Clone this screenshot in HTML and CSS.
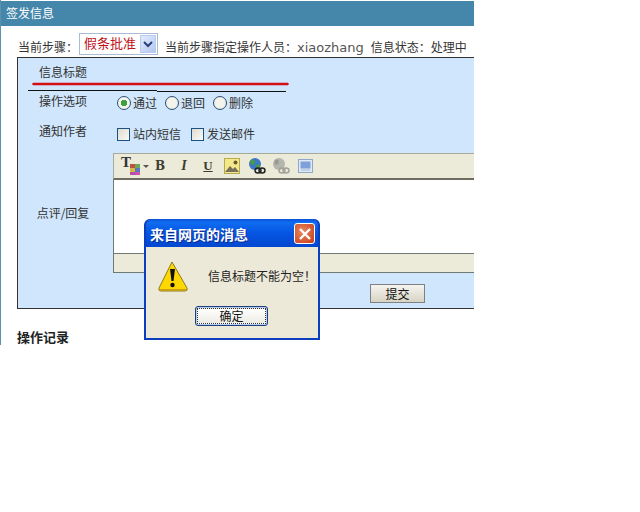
FILE: index.html
```html
<!DOCTYPE html>
<html lang="zh">
<head>
<meta charset="utf-8">
<title>签发信息</title>
<link rel="stylesheet" href="styles.css">
</head>
<body>
<div class="page">
  <div class="titlebar">签发信息</div>
  <div class="steps">
    <span>当前步骤：</span>
    <div class="select"><span class="select-text">假条批准</span><span class="select-btn"><svg width="16" height="18" viewBox="0 0 16 18"><path d="M4 7l4 4 4-4" fill="none" stroke="#2b3f7d" stroke-width="2"/></svg></span></div>
    <span class="assign">当前步骤指定操作人员：<span class="latin">xiaozhang</span></span>
    <span class="status">信息状态：处理中</span>
  </div>
  <div class="panel">
    <div class="title-row">
      <div class="row-label">信息标题</div>
      <div class="rule"><i class="seg"></i><i class="seg seg-low"></i></div>
    </div>
    <div class="row row-options">
      <div class="row-label">操作选项</div>
      <div class="controls">
        <label class="opt"><i class="radio on"></i>通过</label>
        <label class="opt"><i class="radio"></i>退回</label>
        <label class="opt"><i class="radio"></i>删除</label>
      </div>
    </div>
    <div class="row row-notify">
      <div class="row-label">通知作者</div>
      <div class="controls gap-wide">
        <label class="opt"><i class="check"></i>站内短信</label>
        <label class="opt"><i class="check"></i>发送邮件</label>
      </div>
    </div>
    <div class="row row-editor">
      <div class="row-label">点评/回复</div>
      <div class="editor">
        <div class="toolbar">
          <span class="tool-t"><b class="tee">T</b><svg class="swatch" width="11" height="12" viewBox="0 0 11 12"><rect width="5" height="4" x="1" y="1" fill="#c05038"/><rect width="5" height="4" x="6" y="1" fill="#6aa860"/><rect width="5" height="4" x="1" y="5" fill="#d8b840"/><rect width="5" height="4" x="6" y="5" fill="#5a78c0"/><rect width="5" height="3" x="1" y="9" fill="#b050a8"/><rect width="5" height="3" x="6" y="9" fill="#d050b0"/></svg><svg width="6" height="4" viewBox="0 0 6 4" class="caret"><path d="M0 0h6L3 3z" fill="#555"/></svg></span>
          <b class="tool tool-b">B</b>
          <b class="tool tool-i">I</b>
          <b class="tool tool-u">U</b>
          <svg class="icon" width="16" height="16" viewBox="0 0 16 16"><rect x=".5" y=".5" width="15" height="15" fill="#f5e88a" stroke="#b8a850"/><circle cx="11.5" cy="4.5" r="2" fill="#6a5a30"/><path d="M1 14l5-6 3 3 2-2 4 5z" fill="#77705a"/></svg>
          <svg class="icon" width="18" height="18" viewBox="0 0 18 18"><circle cx="7" cy="7" r="6" fill="#3a78c8"/><path d="M3 3c2-1 4 0 4 2S5 8 4 8 2 5 3 3zM8 8c2-1 4 0 4 1s-2 3-3 2-2-2-1-3z" fill="#4a9a40"/><ellipse cx="10" cy="13.500" rx="3" ry="2.500" fill="none" stroke="#222" stroke-width="1.500"/><ellipse cx="14" cy="13.500" rx="3" ry="2.500" fill="none" stroke="#222" stroke-width="1.500"/></svg>
          <svg class="icon" width="18" height="18" viewBox="0 0 18 18"><circle cx="7" cy="7" r="6" fill="#b4b6ae"/><path d="M3 3c2-1 4 0 4 2S5 8 4 8 2 5 3 3z" fill="#9a9c94"/><ellipse cx="10" cy="13.500" rx="3" ry="2.500" fill="none" stroke="#a0a298" stroke-width="1.500"/><ellipse cx="14" cy="13.500" rx="3" ry="2.500" fill="none" stroke="#a0a298" stroke-width="1.500"/></svg>
          <svg class="icon" width="15" height="14" viewBox="0 0 15 14"><rect x=".5" y=".5" width="14" height="13" fill="#dfe8f4" stroke="#8fa8c8"/><rect x="2.500" y="2.500" width="10" height="7" fill="#7fa0d8"/><path d="M3 11h9" stroke="#a8b8d0"/></svg>
        </div>
        <div class="editor-body"></div>
        <div class="statusbar"></div>
      </div>
    </div>
    <div class="submit-row"><button class="submit" type="button">提交</button></div>
  </div>
  <h4 class="log-title">操作记录</h4>
</div>

<svg class="annotation" width="258" height="6" viewBox="0 0 258 6"><path d="M1.500 3 L255.500 3" stroke="#d40f14" stroke-width="2.500" stroke-linecap="round" fill="none"/></svg>

<div class="dialog">
  <div class="dialog-head">
    <span class="dialog-title">来自网页的消息</span>
    <span class="dialog-close"><svg width="14" height="14" viewBox="0 0 14 14"><path d="M2 2l10 10M12 2L2 12" stroke="#fff" stroke-width="2.400"/></svg></span>
  </div>
  <div class="dialog-body">
    <div class="dialog-msg">
      <svg width="32" height="32" viewBox="0 0 32 32"><path d="M15 2 L30 28 Q31 31 28 31 L4 31 Q1 31 2 28 Z" fill="#ffd800" stroke="#8a7a20" stroke-width="1"/><path d="M3 29h26l1 1-2 1H4z" fill="#c8a010"/><path d="M13 9h5l-1.500 12h-2z" fill="#111"/><circle cx="15.500" cy="25" r="2.200" fill="#111"/></svg>
      <span class="dialog-text">信息标题不能为空！</span>
    </div>
    <button class="dialog-ok" type="button"><span>确定</span></button>
  </div>
</div>
</body>
</html>
```

FILE: styles.css
```css
* { box-sizing: border-box; }
html, body { margin: 0; padding: 0; background: #fff; }
body {
  position: relative;
  width: 640px;
  height: 512px;
  overflow: hidden;
  font-family: "Noto Sans CJK SC", "Liberation Sans", sans-serif;
  font-size: 12px;
  line-height: 16px;
  color: #333;
}
.page {
  width: 474px;
  height: 345px;
  overflow: hidden;
  border-left: 1px solid #5f8fac;
  padding-top: 1px;
}
.titlebar {
  height: 25px;
  padding-left: 5px;
  background: #4587aa;
  color: #fff;
  line-height: 24px;
}
.steps {
  height: 31px;
  padding: 7px 0 0 17px;
  display: flex;
  align-items: flex-start;
}
.steps > span { line-height: 28px; white-space: nowrap; }
.select {
  width: 79px;
  height: 22px;
  margin-left: 1px;
  display: flex;
  align-items: center;
  border: 1px solid #a9bcd4;
  background: #fff;
  padding: 1px;
}
.select-text {
  flex: 1;
  padding: 0 0 2px 3px;
  color: #c01018;
  font-size: 13px;
  line-height: 18px;
}
.select-btn {
  width: 16px;
  height: 18px;
  background: linear-gradient(135deg, #e2ebfd, #b4c7ee);
  border: 1px solid #b9cbee;
  display: flex;
  align-items: center;
  justify-content: center;
}
.select-btn svg { flex: none; }
.steps > .assign { margin-left: 7px; }
.latin { font-family: "DejaVu Sans", sans-serif; font-size: 13px; color: #555; }
.steps > .status { margin-left: 7px; }
.panel {
  margin-left: 16px;
  height: 252px;
  background: #cfe6fc;
  border: 1px solid #333;
  border-right: 0;
}
.title-row { height: 34px; padding-top: 6px; }
.title-row .row-label { height: 16px; }
.rule { display: flex; margin: 10px 0 0 10px; align-items: flex-start; }
.seg { display: block; width: 129px; height: 1px; background: #111; }
.seg-low { margin-top: 1px; }
.row { display: grid; grid-template-columns: 90px 1fr; column-gap: 5px; align-items: start; }
.row-label { width: 90px; text-align: center; }
.row-options { height: 30px; padding-top: 1px; }
.row-notify { height: 31px; padding-top: 1px; }
.row-editor { height: 120px; align-items: center; }
.row-editor .row-label { margin-top: -1px; }
.controls { display: flex; gap: 8px; padding: 2px 0 0 4px; }
.gap-wide { gap: 10px; padding-top: 3px; }
.opt { display: flex; align-items: center; height: 16px; }
.radio {
  width: 14px;
  height: 14px;
  margin-right: 2px;
  border-radius: 50%;
  border: 1px solid #2a5078;
  background: radial-gradient(circle, #f4f3ec 50%, #dcdcd2);
  display: block;
}
.radio.on { background: radial-gradient(circle, #3fa03f 0 3px, #f4f3ec 3.500px); }
.check {
  width: 13px;
  height: 13px;
  margin-right: 3px;
  border: 1px solid #1c5180;
  background: linear-gradient(135deg, #dcdcd2, #fbfbf8);
  display: block;
}
.editor { display: flex; flex-direction: column; height: 120px; background: #fff; width: 361px; }
.toolbar {
  height: 27px;
  flex: none;
  background: #ecead9;
  border-top: 1px solid #a7a99b;
  border-left: 1px solid #a7a99b;
  border-bottom: 2px solid #6d6d62;
  display: flex;
  align-items: center;
  padding-left: 7px;
}
.tool-t { display: flex; align-items: flex-end; width: 26px; height: 18px; }
.tee { font: bold 15px/15px "Liberation Serif", serif; color: #333; margin-top: -2px; align-self: flex-start; }
.swatch { margin-left: -2px; flex: none; }
.caret { margin: 0 0 6px 3px; flex: none; }
.tool { font-family: "Liberation Serif", serif; font-size: 14px; line-height: 18px; color: #3e3e30; text-align: center; width: 12px; }
.tool-b { margin-left: 7px; font-family: "DejaVu Serif", serif; font-size: 12px; }
.tool-i { margin-left: 12px; font-style: italic; font-size: 14px; }
.tool-u { margin-left: 12px; text-decoration: underline; font-size: 13px; }
.icon { flex: none; }
.tool-u + .icon { margin-left: 10px; }
.icon + .icon { margin-left: 8px; }
.icon + .icon + .icon { margin-left: 6px; }
.icon + .icon + .icon + .icon { margin-left: 8px; }
.editor-body { flex: 1; border-left: 1px solid #6f7a74; }
.statusbar {
  height: 20px;
  flex: none;
  background: #ecead9;
  border: 1px solid #6f7a74;
  border-right: 0;
}
.submit-row { height: 35px; padding: 11px 0 0 352px; }
.submit {
  display: block;
  width: 55px;
  height: 19px;
  padding: 0;
  border: 1px solid #7d8084;
  background: linear-gradient(#f4f3ee, #d8d4c4);
  font: 12px/16px "Noto Sans CJK SC", sans-serif;
  color: #111;
}
.log-title {
  margin: 20px 0 0 16px;
  font-size: 13px;
  line-height: 16px;
  color: #222;
  font-weight: 700;
}
.annotation { position: absolute; left: 32px; top: 81px; }
.dialog {
  position: absolute;
  left: 144px;
  top: 219px;
  width: 176px;
  height: 121px;
  border-radius: 6px 6px 0 0;
  background: #0b3fc0;
  border: 2px solid #0b3fc0;
  border-top: 0;
  display: flex;
  flex-direction: column;
}
.dialog-head {
  height: 28px;
  flex: none;
  display: flex;
  align-items: center;
  justify-content: space-between;
  padding: 1px 3px 0 4px;
  background: linear-gradient(#0a52d8 0, #0f6cf0 12%, #0655e2 50%, #0348cf 100%);
  border-radius: 6px 6px 0 0;
}
.dialog-title {
  color: #fff;
  font-weight: 700;
  font-size: 14px;
  line-height: 18px;
  text-shadow: 1px 1px 0 #0a2a90;
}
.dialog-close {
  width: 21px;
  height: 21px;
  display: flex;
  align-items: center;
  justify-content: center;
  border: 1px solid #fff;
  border-radius: 3px;
  background: radial-gradient(circle at 40% 40%, #e88a60, #c83a18);
}
.dialog-body {
  flex: 1;
  background: #ece9d8;
  color: #111;
  display: flex;
  flex-direction: column;
}
.dialog-msg {
  display: flex;
  align-items: center;
  padding: 13px 0 0 11px;
}
.dialog-text { margin: -1px 0 0 19px; white-space: nowrap; color: #222; }
.dialog-ok {
  display: block;
  width: 73px;
  height: 20px;
  margin: 14px 0 0 49px;
  padding: 1px;
  border: 1px solid #1c3f80;
  border-radius: 3px;
  background: #b8cdf0;
  font: 12px/14px "Noto Sans CJK SC", sans-serif;
  color: #111;
}
.dialog-ok span {
  display: block;
  height: 16px;
  border: 1px dotted #333;
  background: linear-gradient(#fff, #ecebe2);
}
```
